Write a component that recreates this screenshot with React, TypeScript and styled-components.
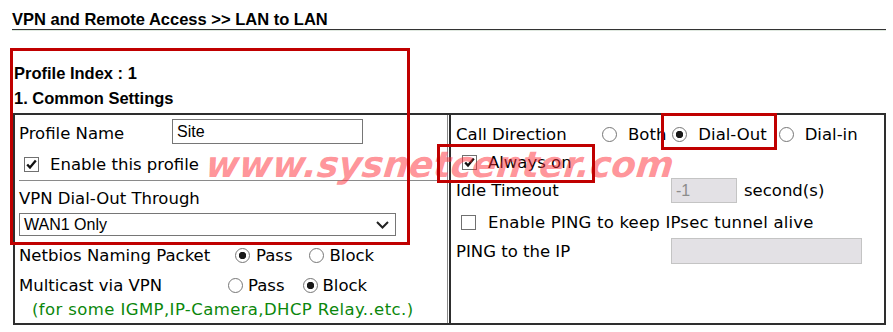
import React from 'react';
import styled, { createGlobalStyle } from 'styled-components';

const GlobalStyle = createGlobalStyle`
    html, body {
        margin: 0;
        padding: 0;
        background: #ffffff;
    }
`;

const Check: React.FC<{ checked?: boolean }> = ({ checked }) => (
    <CheckBox>
        {checked && (
            <svg width="13" height="13" viewBox="0 0 13 13">
                <path d="M2.2 6.4 L5 9.6 L10.8 2.6" fill="none" stroke="#111" strokeWidth="2.3" />
            </svg>
        )}
    </CheckBox>
);

const Radio: React.FC<{ checked?: boolean }> = ({ checked }) => <RadioDot $checked={!!checked} />;

const App: React.FC = () => {
    return (
        <Page>
            <GlobalStyle />
            <Header>VPN and Remote Access &gt;&gt; LAN to LAN</Header>
            <Heading $top={31}>Profile Index : 1</Heading>
            <Heading $top={0}>1. Common Settings</Heading>

            <Table>
                <Cell $left>
                    <Row $h={33}>
                        <Label $w={153} $drop={3}>Profile Name</Label>
                        <TextInput defaultValue="Site" $w={191} />
                    </Row>
                    <Row $h={32} $indent={5}>
                        <Check checked />
                        <Text $ml={11}>Enable this profile</Text>
                    </Row>
                    <Divider />
                    <Caption>VPN Dial-Out Through</Caption>
                    <SelectBox>
                        <span>WAN1 Only</span>
                        <svg width="13" height="8" viewBox="0 0 13 8">
                            <path d="M1 1 L6.5 6.5 L12 1" fill="none" stroke="#222" strokeWidth="2" />
                        </svg>
                    </SelectBox>
                    <Row $h={35}>
                        <Label $w={216}>Netbios Naming Packet</Label>
                        <Option $gap={6}><Radio checked />Pass</Option>
                        <Option $gap={6} $ml={16}><Radio />Block</Option>
                    </Row>
                    <Row $h={25}>
                        <Label $w={209}>Multicast via VPN</Label>
                        <Option $gap={5}><Radio />Pass</Option>
                        <Option $gap={5} $ml={18}><Radio checked />Block</Option>
                    </Row>
                    <Row $h={23}>
                        <Note>(for some IGMP,IP-Camera,DHCP Relay..etc.)</Note>
                    </Row>
                </Cell>

                <Cell>
                    <Row $h={38}>
                        <Label $w={146}>Call Direction</Label>
                        <Option $gap={11}><Radio />Both</Option>
                        <Option $gap={11} $ml={6}><Radio checked />Dial-Out</Option>
                        <Option $gap={11} $ml={12}><Radio />Dial-in</Option>
                    </Row>
                    <Row $h={18} $indent={6}>
                        <Check checked />
                        <Text $ml={11}>Always on</Text>
                    </Row>
                    <Row $h={39}>
                        <Label $w={215}>Idle Timeout</Label>
                        <TextInput defaultValue="-1" $w={66} $disabled readOnly />
                        <Text $ml={7}>second(s)</Text>
                    </Row>
                    <Row $h={24} $indent={5}>
                        <Check />
                        <Text $ml={12} $spacing={0.2}>Enable PING to keep IPsec tunnel alive</Text>
                    </Row>
                    <Row $h={34}>
                        <Label $w={215}>PING to the IP</Label>
                        <TextInput defaultValue="" $w={191} $h={26} $disabled readOnly />
                    </Row>
                </Cell>
            </Table>

            <Watermark>www.sysnetcenter.com</Watermark>
            <Highlight $x={10} $y={48} $w={400} $h={197} />
            <Highlight $x={661} $y={113} $w={116} $h={37} />
            <Highlight $x={437} $y={144} $w={158} $h={39} />
        </Page>
    );
};

export default App;

const Page = styled.div`
    position: relative;
    width: 893px;
    height: 332px;
    overflow: hidden;
    padding-top: 9px;
    box-sizing: border-box;
    font-family: 'DejaVu Sans', Verdana, sans-serif;
    font-size: 16.5px;
    color: #000;
`;

const Header = styled.div`
    margin: 0 7px 0 12px;
    font-family: 'Liberation Sans', Arial, sans-serif;
    font-weight: bold;
    font-size: 16.5px;
    line-height: 20px;
    border-bottom: 1px solid #333;
    box-shadow: 0 1px 0 #dfe8df;
`;

const Heading = styled.div<{ $top: number }>`
    margin-top: ${p => p.$top}px;
    padding-left: 14px;
    font-family: 'Liberation Sans', Arial, sans-serif;
    font-weight: bold;
    font-size: 16.5px;
    line-height: 25px;
`;

const Table = styled.div`
    margin: 2px 0 0 13px;
    width: 873px;
    box-sizing: border-box;
    border: 2px solid #2e2e2e;
    display: grid;
    grid-template-columns: 433px 435px;
    column-gap: 1px;
`;

const Cell = styled.div<{ $left?: boolean }>`
    display: flex;
    flex-direction: column;
    padding: 0 0 2px ${p => (p.$left ? 4 : 5)}px;
    border-${p => (p.$left ? 'right' : 'left')}: ${p => (p.$left ? '1px solid #8a8a8a' : '2px solid #2e2e2e')};
`;

const Row = styled.div<{ $h: number; $indent?: number }>`
    display: flex;
    align-items: center;
    height: ${p => p.$h}px;
    padding-left: ${p => p.$indent ?? 0}px;
    white-space: nowrap;
`;

const Label = styled.span<{ $w: number; $drop?: number }>`
    width: ${p => p.$w}px;
    flex-shrink: 0;
    padding-top: ${p => p.$drop ?? 0}px;
`;

const Text = styled.span<{ $ml?: number; $spacing?: number }>`
    margin-left: ${p => p.$ml ?? 0}px;
    letter-spacing: ${p => p.$spacing ?? 0}px;
`;

const Caption = styled.div`
    padding-top: 8px;
    height: 24px;
    line-height: 20px;
`;

const Divider = styled.div`
    height: 1px;
    background: #8a8a8a;
`;

const SelectBox = styled.div`
    display: flex;
    align-items: center;
    justify-content: space-between;
    width: 377px;
    height: 23px;
    margin-bottom: 2px;
    box-sizing: border-box;
    border: 1px solid #767676;
    padding: 0 6px 0 4px;
    font-family: 'Liberation Sans', Arial, sans-serif;
    font-size: 16px;
`;

const TextInput = styled.input<{ $w: number; $h?: number; $disabled?: boolean }>`
    width: ${p => p.$w}px;
    height: ${p => p.$h ?? 25}px;
    box-sizing: border-box;
    margin: 0;
    padding: 0 4px;
    border: 1px solid ${p => (p.$disabled ? '#c4c4c4' : '#767676')};
    border-radius: 0;
    background: ${p => (p.$disabled ? '#e3e1e5' : '#ffffff')};
    color: ${p => (p.$disabled ? '#8c8c8c' : '#000')};
    font-family: 'Liberation Sans', Arial, sans-serif;
    font-size: 16px;
    outline: none;
`;

const CheckBox = styled.span`
    display: inline-flex;
    align-items: center;
    justify-content: center;
    width: 15px;
    height: 15px;
    box-sizing: border-box;
    border: 1px solid #707070;
    background: #fff;
    flex-shrink: 0;
`;

const RadioDot = styled.span<{ $checked: boolean }>`
    display: inline-block;
    width: 15px;
    height: 15px;
    box-sizing: border-box;
    border-radius: 50%;
    border: 1px solid #767676;
    background: ${p => (p.$checked ? 'radial-gradient(circle, #1a1a1a 0 3.4px, #ffffff 4px)' : '#ffffff')};
    flex-shrink: 0;
`;

const Option = styled.label<{ $gap: number; $ml?: number }>`
    display: inline-flex;
    align-items: center;
    gap: ${p => p.$gap}px;
    margin-left: ${p => p.$ml ?? 0}px;
`;

const Note = styled.span`
    margin-left: 13px;
    color: #0b870b;
    letter-spacing: 0.4px;
`;

const Watermark = styled.div`
    position: absolute;
    left: 205px;
    top: 145px;
    font-family: 'DejaVu Sans', Verdana, sans-serif;
    font-weight: bold;
    font-style: italic;
    font-size: 36px;
    line-height: 40px;
    color: rgba(255, 45, 55, 0.52);
    white-space: nowrap;
    transform: skewX(-6deg);
    transform-origin: 0 32px;
    pointer-events: none;
`;

const Highlight = styled.div<{ $x: number; $y: number; $w: number; $h: number }>`
    position: absolute;
    left: ${p => p.$x}px;
    top: ${p => p.$y}px;
    width: ${p => p.$w}px;
    height: ${p => p.$h}px;
    box-sizing: border-box;
    border: 3px solid #c00000;
    pointer-events: none;
`;
